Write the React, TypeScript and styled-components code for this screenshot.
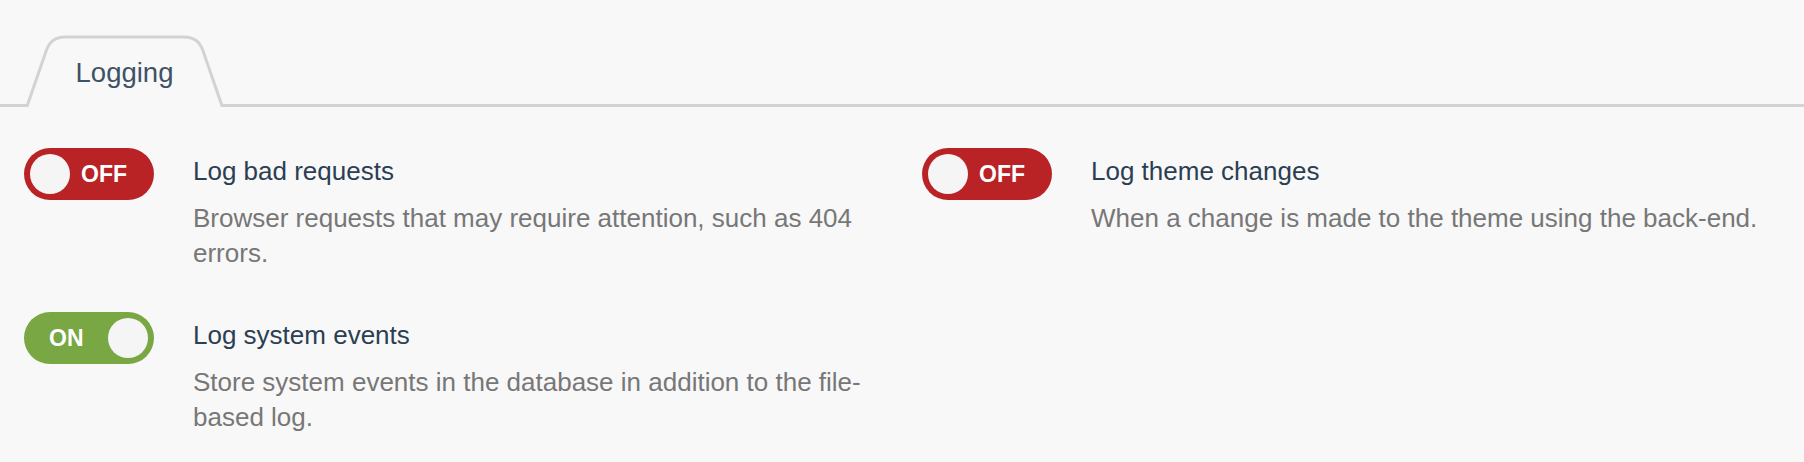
import * as React from 'react'
import styled, { createGlobalStyle } from 'styled-components'

type SettingItem = {
  title: string
  description: string
  enabled: boolean
}

const settings: SettingItem[] = [
  {
    title: 'Log bad requests',
    description: 'Browser requests that may require attention, such as 404 errors.',
    enabled: false,
  },
  {
    title: 'Log theme changes',
    description: 'When a change is made to the theme using the back-end.',
    enabled: false,
  },
  {
    title: 'Log system events',
    description:
      'Store system events in the database in addition to the file-based log.',
    enabled: true,
  },
]

const GlobalStyle = createGlobalStyle`
  body {
    margin: 0;
    background: #f8f8f8;
    font-family: 'Liberation Sans', Arial, sans-serif;
  }
`

const Page = styled.div`
  min-height: 462px;
  background: #f8f8f8;
`

const TabBar = styled.div`
  display: flex;
  padding: 35px 0 0 20px;
  border-bottom: 3px solid #d3d3d3;
`

const Tab = styled.div`
  position: relative;
  width: 209px;
  height: 72px;
  margin-bottom: -3px;
  padding-top: 3px;
  box-sizing: border-box;
  display: flex;
  align-items: center;
  justify-content: center;
  font-size: 27.5px;
  color: #3e5266;
`

const TabShape = styled.svg`
  position: absolute;
  left: 0;
  top: 0;
  overflow: visible;
`

const TabLabel = styled.span`
  position: relative;
`

const Settings = styled.div`
  display: grid;
  grid-template-columns: 1fr 1fr;
  column-gap: 40px;
  row-gap: 41px;
  padding: 41px 24px 0 24px;
`

const Setting = styled.div`
  display: flex;
  align-items: flex-start;
`

const Toggle = styled.div<{ $on: boolean }>`
  flex-shrink: 0;
  width: 130px;
  height: 52px;
  padding: 0 6px;
  box-sizing: border-box;
  border-radius: 26px;
  display: flex;
  align-items: center;
  background: ${props => (props.$on ? '#78a743' : '#b92326')};
  cursor: pointer;
`

const Knob = styled.div<{ $on: boolean }>`
  width: 40px;
  height: 40px;
  border-radius: 50%;
  background: #f5f5f5;
  margin-left: ${props => (props.$on ? 'auto' : '0')};
`

const ToggleLabel = styled.span<{ $on: boolean }>`
  color: #fff;
  font-weight: bold;
  font-size: 23px;
  line-height: 1;
  margin-left: ${props => (props.$on ? '19px' : '11px')};
`

const Text = styled.div`
  margin-left: 39px;
  padding-top: 6px;
`

const Title = styled.div`
  font-size: 26px;
  line-height: 35px;
  color: #2b3e52;
  margin-bottom: 12px;
`

const Description = styled.div`
  font-size: 26px;
  line-height: 35px;
  color: #777;
`

const TabOutline = () => (
  <TabShape width="209" height="72" viewBox="0 0 209 72" aria-hidden>
    <path
      d="M6.8 72 L26.4 15.2 Q31 2 45 2 L164 2 Q178.2 2 182.8 15.2 L202.4 72 Z"
      fill="#f8f8f8"
    />
    <path
      d="M0 70.5 L7.3 70.5 L26.4 15.2 Q31 2 45 2 L164 2 Q178.2 2 182.8 15.2 L201.9 70.5 L209 70.5"
      fill="none"
      stroke="#d3d3d3"
      strokeWidth="3"
    />
  </TabShape>
)

const Switch = ({ on }: { on: boolean }) => (
  <Toggle $on={on} role="switch" aria-checked={on}>
    {on ? (
      <>
        <ToggleLabel $on>ON</ToggleLabel>
        <Knob $on />
      </>
    ) : (
      <>
        <Knob $on={false} />
        <ToggleLabel $on={false}>OFF</ToggleLabel>
      </>
    )}
  </Toggle>
)

const App = () => {
  return (
    <Page>
      <GlobalStyle />
      <TabBar>
        <Tab>
          <TabOutline />
          <TabLabel>Logging</TabLabel>
        </Tab>
      </TabBar>
      <Settings>
        {settings.map(item => (
          <Setting key={item.title}>
            <Switch on={item.enabled} />
            <Text>
              <Title>{item.title}</Title>
              <Description>{item.description}</Description>
            </Text>
          </Setting>
        ))}
      </Settings>
    </Page>
  )
}

export default App
